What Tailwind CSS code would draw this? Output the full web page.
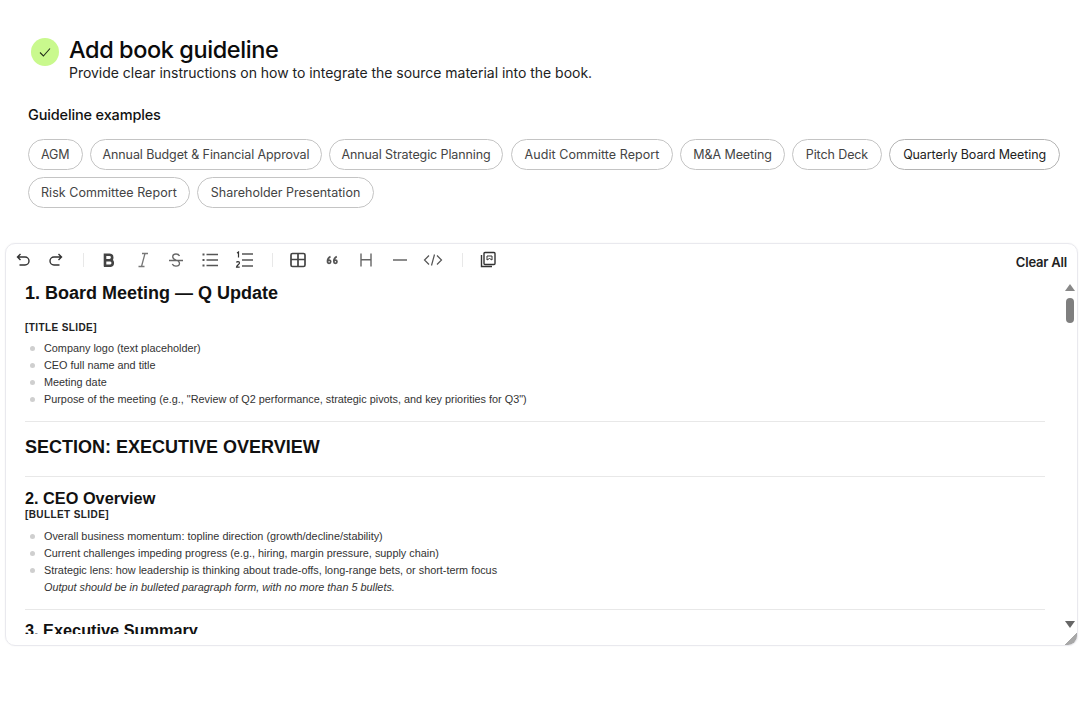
<!DOCTYPE html>
<html lang="en">
<head>
    <meta charset="UTF-8">
    <meta name="viewport" content="width=device-width, initial-scale=1.0">
    <script src="https://cdn.jsdelivr.net/npm/@tailwindcss/browser@4"></script>
    <title>Add book guideline</title>
</head>
<body class="bg-white font-['Inter',sans-serif] text-[#111]">
    <div class="h-[720px] overflow-hidden pt-[36px]">
        <header class="flex items-start gap-[10px] pl-[31px]">
            <div class="mt-[2px] flex h-[28px] w-[28px] items-center justify-center rounded-full bg-[#c9f98d]">
                <svg class="h-[16px] w-[16px]" viewBox="0 0 16 16" fill="none" stroke="#22301a" stroke-width="1.1"><path d="M3 8.500 6.400 12 13 4.500"/></svg>
            </div>
            <div>
                <h1 class="text-[23.5px] leading-[28px] font-medium tracking-[-0.42px] text-[#0b0b0b]">Add book guideline</h1>
                <p class="-mt-[1px] text-[14px] leading-[20px] tracking-[-0.025px] text-[#222]">Provide clear instructions on how to integrate the source material into the book.</p>
            </div>
        </header>

        <section class="mt-[22px] pl-[28px]">
            <h2 class="text-[14.5px] leading-[20px] font-medium tracking-[-0.15px] text-[#111]">Guideline examples</h2>
            <div class="mt-[14px] flex w-[1040px] flex-wrap gap-[7px] text-[12.5px] tracking-[-0.1px] text-[#444]">
                <span class="flex h-[31px] items-center rounded-full border border-[#c4c4c4] px-[12px] pt-[1px]">AGM</span>
                <span class="flex h-[31px] items-center rounded-full border border-[#c4c4c4] px-[12px] pt-[1px]">Annual Budget &amp; Financial Approval</span>
                <span class="flex h-[31px] items-center rounded-full border border-[#c4c4c4] px-[11px] pt-[1px]">Annual Strategic Planning</span>
                <span class="ml-[1px] flex h-[31px] items-center rounded-full border border-[#c4c4c4] px-[13px] pt-[1px] tracking-[0.05px]">Audit Committe Report</span>
                <span class="flex h-[31px] items-center rounded-full border border-[#c4c4c4] px-[12px] pt-[1px]">M&amp;A Meeting</span>
                <span class="flex h-[31px] items-center rounded-full border border-[#c4c4c4] px-[13px] pt-[1px]">Pitch Deck</span>
                <span class="flex h-[31px] items-center rounded-full border border-[#b4b4b4] px-[13px] pt-[1px] text-[#222]">Quarterly Board Meeting</span>
                <span class="flex h-[31px] items-center rounded-full border border-[#c4c4c4] px-[12px] pt-[1px] tracking-[0.05px]">Risk Committee Report</span>
                <span class="flex h-[31px] items-center rounded-full border border-[#c4c4c4] px-[13px] pt-[1px] tracking-[0px]">Shareholder Presentation</span>
            </div>
        </section>

        <section class="relative mt-[35px] ml-[5px] h-[403px] w-[1073px] overflow-hidden rounded-[10px] border border-[#e9e9ee] shadow-[0_0_2px_rgba(0,0,0,0.06)]">
            <!-- toolbar -->
            <div class="flex h-[32px] items-center pr-[10px] pl-[9px]">
                <div class="flex items-center">
                    <svg class="h-[16px] w-[16px]" viewBox="0 0 16 16" fill="none" stroke="#333" stroke-width="1.4"><path d="M5.500 2 2.500 5l3 3M2.500 5H10a3.500 3.500 0 0 1 0 8H4.500"/></svg>
                    <svg class="ml-[17px] h-[16px] w-[16px]" viewBox="0 0 16 16" fill="none" stroke="#333" stroke-width="1.4"><path d="M10.500 2l3 3-3 3M13.500 5H6a3.500 3.500 0 0 0 0 8h5.500"/></svg>
                    <span class="ml-[19px] h-[14px] w-px bg-[#e8e8e8]"></span>
                    <svg class="ml-[17px] h-[16px] w-[16px]" viewBox="0 0 16 16" fill="none" stroke="#444" stroke-width="2.600"><path d="M4 1.500v13M3 2.800h5.500a2.700 2.700 0 0 1 0 5.400H4m0 0h5.500a2.800 2.800 0 0 1 0 5.500H3"/></svg>
                    <svg class="ml-[18px] h-[16px] w-[16px]" viewBox="0 0 16 16" fill="none" stroke="#777" stroke-width="1.300"><path d="M7 1.500h6M3.500 14.500h6M10 1.500 6.500 14.500"/></svg>
                    <svg class="ml-[17px] h-[16px] w-[16px]" viewBox="0 0 16 16" fill="none" stroke="#666" stroke-width="1.300"><path d="M1 8.500h14M11.500 4C11 2.800 9.700 2 8 2 6 2 4.700 3.100 4.700 4.800c0 1.400 1 2.500 3.300 3.200 2.400.8 3.500 1.800 3.500 3.300 0 1.800-1.500 2.900-3.500 2.900-1.800 0-3.100-.8-3.700-2.200"/></svg>
                    <svg class="ml-[18px] h-[16px] w-[16px]" viewBox="0 0 16 16" fill="none" stroke="#555" stroke-width="1.300"><path d="M4.500 2.500H16M4.500 8H16M4.500 13.500H16"/><path stroke-width="2" d="M.5 2.500h2M.5 8h2M.5 13.500h2"/></svg>
                    <svg class="ml-[17px] h-[18px] w-[18px]" viewBox="0 0 18 18" fill="none" stroke="#555" stroke-width="1.300"><path d="M7 3h11M7 9h11M7 15h11"/><path stroke-width="1.200" stroke="#333" d="M2 2 3.500 1v5.500M1.500 11.500c.3-1.200 3-1.200 3 .5 0 1.300-3 2.500-3 4.200h3.200"/></svg>
                    <span class="ml-[19px] h-[14px] w-px bg-[#e8e8e8]"></span>
                    <svg class="ml-[17px] h-[16px] w-[16px]" viewBox="0 0 16 16" fill="none" stroke="#444" stroke-width="1.700"><rect x="1" y="1.500" width="14" height="13" rx="1.500"/><path d="M1 7.500h14M8 1.500v13"/></svg>
                    <svg class="ml-[18px] h-[16px] w-[16px]" viewBox="0 0 16 16" fill="none" stroke="#555" stroke-width="1.700"><path d="M6.500 4.500C4.500 5.500 3.500 7 3.500 9.300"/><circle cx="5.100" cy="9.800" r="1.600"/><path d="M12.800 4.500C10.800 5.500 9.800 7 9.800 9.300"/><circle cx="11.400" cy="9.800" r="1.600"/></svg>
                    <svg class="ml-[18px] h-[16px] w-[16px]" viewBox="0 0 16 16" fill="none" stroke="#666" stroke-width="1.400"><path d="M3 1.500v13M13 1.500v13M3 7.800h10"/></svg>
                    <svg class="ml-[18px] h-[16px] w-[16px]" viewBox="0 0 16 16" fill="none" stroke="#666" stroke-width="1.500"><path d="M1 8h14"/></svg>
                    <svg class="ml-[15px] h-[20px] w-[20px]" viewBox="0 0 20 20" fill="none" stroke="#555" stroke-width="1.200"><path d="M6 5.500 1.500 10 6 14.500M14 5.500l4.500 4.500L14 14.500M11.500 4.500l-3 11"/></svg>
                    <span class="ml-[19px] h-[14px] w-px bg-[#e8e8e8]"></span>
                    <svg class="ml-[16px] h-[18px] w-[18px]" viewBox="0 0 18 18" fill="none" stroke="#333" stroke-width="1.400"><rect x="5" y="1.500" width="11" height="12" rx="1"/><path d="M2.500 4v11.500h10.500"/><path d="M8 9V5h5v4l-2.500-1.500z" stroke-width="1"/></svg>
                </div>
                <button class="mt-[6px] ml-auto text-[13px] font-semibold tracking-[-0.2px] text-[#222]">Clear All</button>
            </div>

            <!-- document -->
            <div class="h-[358px] overflow-hidden pr-[32px] pl-[19px] font-['Liberation_Sans',sans-serif] text-[10.85px] text-[#333]">
                <h3 class="mt-[5px] text-[18px] leading-[24px] font-bold text-[#111]">1. Board Meeting — Q Update</h3>
                <p class="mt-[16px] text-[10px] leading-[13px] font-bold tracking-[0.4px] text-[#222]">[TITLE SLIDE]</p>
                <ul class="mt-[6px] pl-[19px] leading-[17px]">
                    <li class="relative before:absolute before:top-[6px] before:-left-[14px] before:h-[5px] before:w-[5px] before:rounded-full before:bg-[#cfcfcf]">Company logo (text placeholder)</li>
                    <li class="relative before:absolute before:top-[6px] before:-left-[14px] before:h-[5px] before:w-[5px] before:rounded-full before:bg-[#cfcfcf]">CEO full name and title</li>
                    <li class="relative before:absolute before:top-[6px] before:-left-[14px] before:h-[5px] before:w-[5px] before:rounded-full before:bg-[#cfcfcf]">Meeting date</li>
                    <li class="relative before:absolute before:top-[6px] before:-left-[14px] before:h-[5px] before:w-[5px] before:rounded-full before:bg-[#cfcfcf]">Purpose of the meeting (e.g., "Review of Q2 performance, strategic pivots, and key priorities for Q3")</li>
                </ul>
                <hr class="mt-[13px] border-t border-[#e8e8e8]">
                <h3 class="mt-[13px] text-[18px] leading-[24px] font-bold text-[#111]">SECTION: EXECUTIVE OVERVIEW</h3>
                <hr class="mt-[17px] border-t border-[#e8e8e8]">
                <h3 class="mt-[11px] text-[16.300px] leading-[20px] font-bold text-[#111]">2. CEO Overview</h3>
                <p class="text-[10px] leading-[13px] font-bold tracking-[0.4px] text-[#222]">[BULLET SLIDE]</p>
                <ul class="mt-[7px] pl-[19px] leading-[17px]">
                    <li class="relative before:absolute before:top-[6px] before:-left-[14px] before:h-[5px] before:w-[5px] before:rounded-full before:bg-[#cfcfcf]">Overall business momentum: topline direction (growth/decline/stability)</li>
                    <li class="relative before:absolute before:top-[6px] before:-left-[14px] before:h-[5px] before:w-[5px] before:rounded-full before:bg-[#cfcfcf]">Current challenges impeding progress (e.g., hiring, margin pressure, supply chain)</li>
                    <li class="relative before:absolute before:top-[6px] before:-left-[14px] before:h-[5px] before:w-[5px] before:rounded-full before:bg-[#cfcfcf]">Strategic lens: how leadership is thinking about trade-offs, long-range bets, or short-term focus<br><em>Output should be in bulleted paragraph form, with no more than 5 bullets.</em></li>
                </ul>
                <hr class="mt-[13px] border-t border-[#e8e8e8]">
                <h3 class="mt-[10px] text-[16.300px] leading-[20px] font-bold text-[#111]">3. Executive Summary</h3>
            </div>

            <!-- scrollbar -->
            <div class="absolute top-[40px] right-[2px] flex h-[344px] w-[10px] flex-col items-center">
                <span class="h-0 w-0 border-x-[5px] border-b-[7px] border-x-transparent border-b-[#888]"></span>
                <span class="mt-[7px] h-[25px] w-[8px] rounded-full bg-[#7f7f7f]"></span>
                <span class="mt-auto h-0 w-0 border-x-[5px] border-t-[7px] border-x-transparent border-t-[#666]"></span>
            </div>
            <!-- resize handle -->
            <span class="absolute right-0 bottom-0 h-[13px] w-[13px] bg-[linear-gradient(135deg,transparent_50%,#a8a8a8_50%)]"></span>
        </section>
    </div>
</body>
</html>
